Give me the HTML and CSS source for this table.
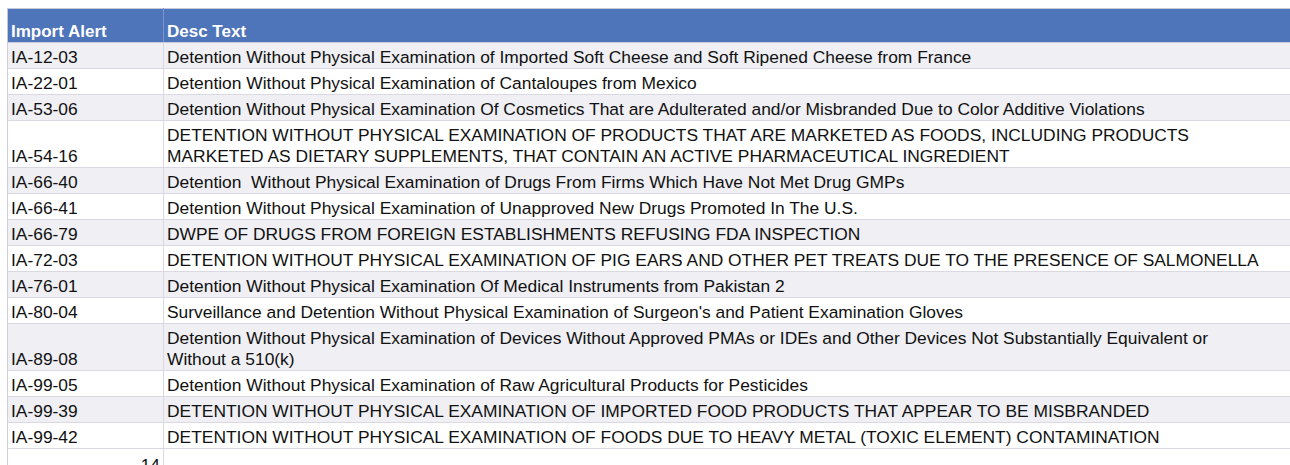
FILE: index.html
```html
<!DOCTYPE html>
<html>
<head>
<meta charset="utf-8">
<link rel="stylesheet" href="styles.css">
</head>
<body>
<table class="sheet">
  <thead>
    <tr class="head"><th class="c1">Import Alert</th><th class="c2">Desc Text</th></tr>
  </thead>
  <tbody>
    <tr class="alt"><td>IA-12-03</td><td>Detention Without Physical Examination of Imported Soft Cheese and Soft Ripened Cheese from France</td></tr>
    <tr><td>IA-22-01</td><td>Detention Without Physical Examination of Cantaloupes from Mexico</td></tr>
    <tr class="alt"><td>IA-53-06</td><td>Detention Without Physical Examination Of Cosmetics That are Adulterated and/or Misbranded Due to Color Additive Violations</td></tr>
    <tr><td>IA-54-16</td><td>DETENTION WITHOUT PHYSICAL EXAMINATION OF PRODUCTS THAT ARE MARKETED AS FOODS, INCLUDING PRODUCTS<br>MARKETED AS DIETARY SUPPLEMENTS, THAT CONTAIN AN ACTIVE PHARMACEUTICAL INGREDIENT</td></tr>
    <tr class="alt"><td>IA-66-40</td><td>Detention&nbsp; Without Physical Examination of Drugs From Firms Which Have Not Met Drug GMPs</td></tr>
    <tr><td>IA-66-41</td><td>Detention Without Physical Examination of Unapproved New Drugs Promoted In The U.S.</td></tr>
    <tr class="alt"><td>IA-66-79</td><td>DWPE OF DRUGS FROM FOREIGN ESTABLISHMENTS REFUSING FDA INSPECTION</td></tr>
    <tr><td>IA-72-03</td><td>DETENTION WITHOUT PHYSICAL EXAMINATION OF PIG EARS AND OTHER PET TREATS DUE TO THE PRESENCE OF SALMONELLA</td></tr>
    <tr class="alt"><td>IA-76-01</td><td>Detention Without Physical Examination Of Medical Instruments from Pakistan 2</td></tr>
    <tr><td>IA-80-04</td><td>Surveillance and Detention Without Physical Examination of Surgeon's and Patient Examination Gloves</td></tr>
    <tr class="alt"><td>IA-89-08</td><td>Detention Without Physical Examination of Devices Without Approved PMAs or IDEs and Other Devices Not Substantially Equivalent or<br>Without a 510(k)</td></tr>
    <tr><td>IA-99-05</td><td>Detention Without Physical Examination of Raw Agricultural Products for Pesticides</td></tr>
    <tr class="alt"><td>IA-99-39</td><td>DETENTION WITHOUT PHYSICAL EXAMINATION OF IMPORTED FOOD PRODUCTS THAT APPEAR TO BE MISBRANDED</td></tr>
    <tr><td>IA-99-42</td><td>DETENTION WITHOUT PHYSICAL EXAMINATION OF FOODS DUE TO HEAVY METAL (TOXIC ELEMENT) CONTAMINATION</td></tr>
    <tr class="total"><td class="num">14</td><td></td></tr>
  </tbody>
</table>
</body>
</html>
```
FILE: styles.css
```css
html, body {
  margin: 0;
  padding: 0;
  background: #ffffff;
  overflow: hidden;
}
body {
  padding: 8px 0 0 7px;
  font-family: "Liberation Sans", Arial, Helvetica, sans-serif;
  font-size: 17.4px;
  color: #111111;
}
.sheet {
  border-collapse: collapse;
  width: 1300px;
  table-layout: fixed;
}
.sheet .c1 { width: 149px; }
.sheet th, .sheet td {
  border: 1px solid #d9d8e3;
  padding: 4px 3px 0 3px;
  line-height: 21px;
  text-align: left;
  vertical-align: bottom;
  white-space: nowrap;
  overflow: visible;
}
.sheet td:first-child { border-left-color: #cfced9; }
.head th {
  background: #4e74b9;
  color: #ffffff;
  font-weight: bold;
  font-size: 17px;
  height: 29px;
  border-color: #4e74b9;
  border-top: 1px solid #c3c8db;
  border-bottom: 1px solid #c9cad9;
}
.head th.c1 { border-right: 1px solid #7a95c8; border-left-color: #c3c8db; }
.alt td { background: #efeff4; }
.total td { height: 23px; }
.total td.num { text-align: right; }
```
